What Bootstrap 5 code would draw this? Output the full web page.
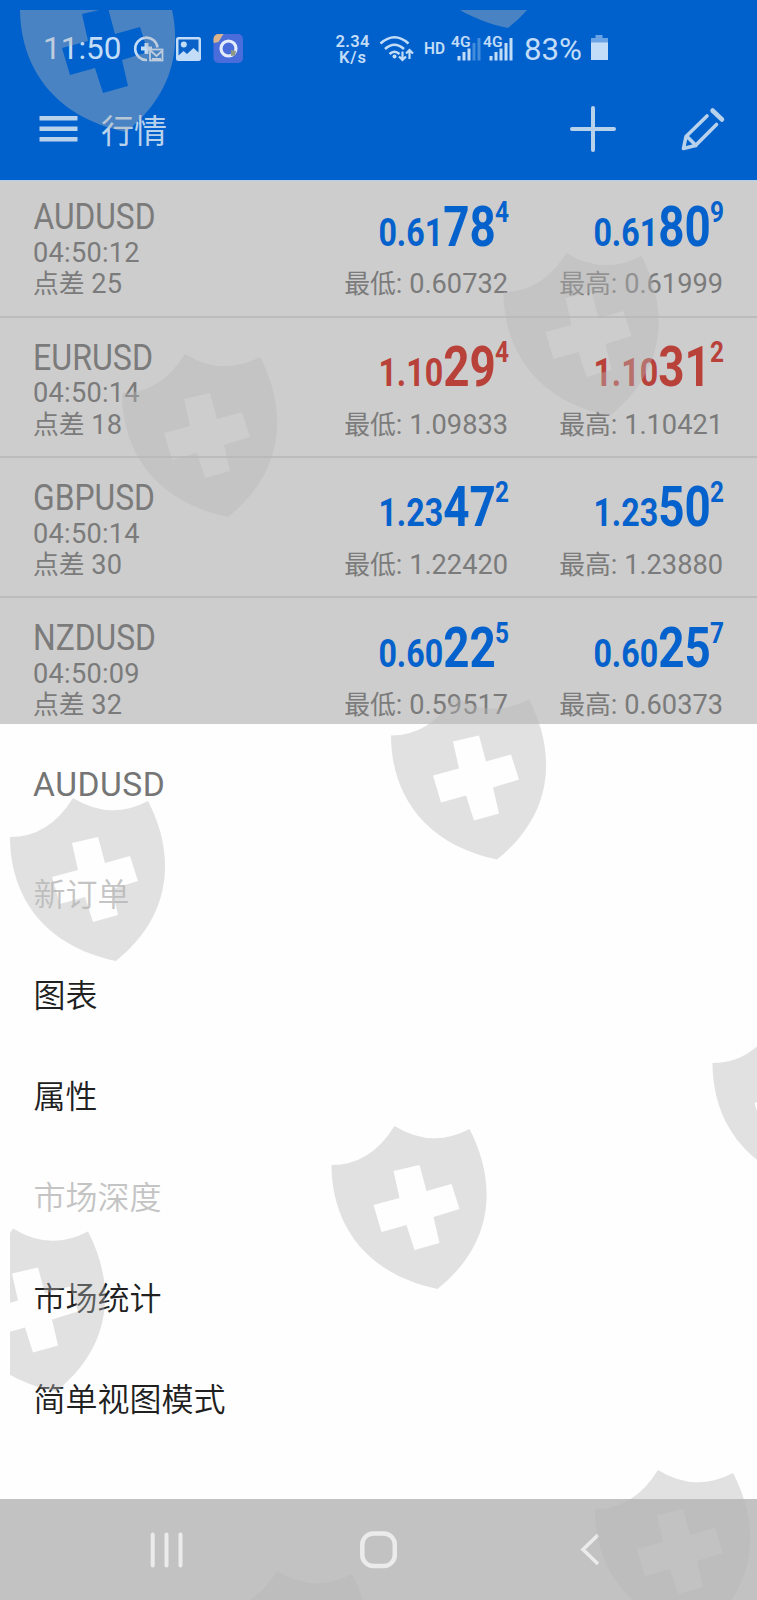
<!DOCTYPE html>
<html lang="zh-CN">
<head>
    <meta charset="utf-8">
    <meta name="viewport" content="width=device-width, initial-scale=1">
    <title>行情</title>
    <link href="https://cdn.jsdelivr.net/npm/bootstrap@5.3.0/dist/css/bootstrap.min.css" rel="stylesheet">
    <style>
        body { font-family: Roboto, "Noto Sans CJK SC", sans-serif; background: #fefefe; }
        svg { display: block; flex: none; overflow: visible; }
        svg text { font-family: Roboto, "Noto Sans CJK SC", sans-serif; }
        .screen { width: 757px; height: 1600px; }

        /* header */
        .top-area { height: 180px; background: #0061cc; color: #c3ddf8; }
        .status-line { height: 58px; margin-top: 20px; }
        .clock { box-sizing: content-box; width: 91px; padding-left: 43px; font-size: 31.5px; line-height: 60px; }
        .tool-line { height: 102px; color: #b9d2ec; }
        .page-name { font-size: 33px; line-height: 50px; padding-top: 5px; margin-left: 23px; width: 468px; }

        /* quotes */
        .quotes { height: 544px; background: #cdcdcd; border-top: 1px solid #b4cfe8; color: #7b7b7b; overflow: hidden; }
        .quote { height: 140.4px; flex: none; padding: 0 34px 15.3px 33px; border-bottom: 2px solid #bcbcbc; }
        .quote:first-child { height: 136.7px; }
        .quote-text { font-size: 27.2px; line-height: 31.2px; white-space: nowrap; }
        .quote-text svg { margin-bottom: 1.7px; }
        .quote-text .cn { font-size: 25.8px; }
        .quote-time { letter-spacing: .25px; }
        .side-col { width: 215px; }
        .up { fill: #0561cb; }
        .down { fill: #b8413a; }
        .price { font-weight: 700; }

        /* bottom sheet */
        .sheet { height: 775px; color: #202020; font-size: 32px; }
        .sheet-title { height: 119px; line-height: 121px; padding-left: 33px; font-size: 33.6px; letter-spacing: .5px; color: #757575; }
        .sheet-item { height: 101.1px; line-height: 104px; padding-left: 33.5px; font-weight: 350; }
        .sheet-item.off { color: #c4c4c4; }

        .nav-keys { height: 101px; background: #c2c2c2; }
        .shields { left: 10px; top: 10px; pointer-events: none; overflow: hidden; }
    </style>
</head>
<body>
<div class="screen position-relative overflow-hidden">

    <div class="top-area overflow-hidden">
        <div class="status-line d-flex align-items-center">
            <div class="clock">11:50</div>
            <svg width="31" height="30" viewBox="0 0 31 30" fill="none" stroke="currentColor">
                <path d="M13 26A11.2 11.2 0 1 1 23.500 13.500" stroke-width="2.6"/>
                <path d="M12.500 9v11M7 14.500h11" stroke-width="4"/>
                <rect x="16" y="15.500" width="12.500" height="11" stroke-width="1.8"/>
                <path d="M17 17l5.500 5 5.500-5M18 25h9" stroke-width="1.800"/>
            </svg>
            <svg class="ms-2" width="30" height="26" viewBox="0 0 30 26">
                <rect x="3" y="1" width="25" height="24" rx="2.500" fill="currentColor"/>
                <path d="M5.500 3.500h20v13l-5-4.500-6.500 6-3.500-3-5 4.500z" fill="#0a62c8"/>
                <circle cx="10.800" cy="8.500" r="3" fill="currentColor"/>
            </svg>
            <svg width="42" height="30" viewBox="0 0 42 30">
                <rect x="10.500" y="0" width="29.500" height="29" rx="5" fill="#4a6ddb"/>
                <path d="M10.500 9V5a5 5 0 0 1 5-5h5l-5 8z" fill="#d9b38c"/>
                <circle cx="25.500" cy="14.500" r="7.500" fill="none" stroke="#e4ecfb" stroke-width="3.200"/>
                <path d="M28 16l5 1-1 4.500-4 .5z" fill="#8d9a86"/>
            </svg>
            <svg width="130" height="34" viewBox="0 0 130 34" fill="currentColor">
                <g font-size="16.500" font-weight="600">
                    <text x="90.500" y="15" textLength="34">2.34</text>
                    <text x="94" y="30.500" textLength="27">K/s</text>
                </g>
            </svg>
            <svg width="42" height="28" viewBox="0 0 42 28" fill="none" stroke="currentColor" stroke-width="2.600">
                <path d="M5.500 8.500q14-12.500 28 0M10 14q9.500-8.500 19 0M14.500 19q5-4.500 10 0"/>
                <circle cx="19.500" cy="21.500" r="2" fill="currentColor" stroke="none"/>
                <path d="M27.500 16.500v8M24 21.500l3.500 3.500 3.500-3.500M34.500 24v-8M31 18.500l3.500-3.500 3.500 3.500" stroke-width="2.200"/>
            </svg>
            <svg width="34" height="24" viewBox="0 0 34 24" fill="currentColor">
                <text x="7" y="16.500" font-size="16" font-weight="600" textLength="21" lengthAdjust="spacingAndGlyphs">HD</text>
            </svg>
            <svg width="32" height="28" viewBox="0 0 32 28" fill="currentColor">
                <text x="0" y="11.500" font-size="14.500" font-weight="600" textLength="19.500" lengthAdjust="spacingAndGlyphs">4G</text>
                <path d="M6.500 21h3v4.500h-3zM11.500 17h3v8.500h-3zM16.500 13.500h3v12h-3z"/>
                <path d="M21.500 8h3v17.500h-3zM26.500 3h3v22.500h-3z" opacity=".35"/>
            </svg>
            <svg width="32" height="28" viewBox="0 0 32 28" fill="currentColor">
                <text x="0" y="11.500" font-size="14.500" font-weight="600" textLength="19.500" lengthAdjust="spacingAndGlyphs">4G</text>
                <path d="M6.500 21h3v4.500h-3zM11.500 17h3v8.500h-3zM16.500 13.500h3v12h-3zM21.500 8h3v17.500h-3zM26.500 3h3v22.500h-3z"/>
            </svg>
            <svg width="96" height="40" viewBox="0 0 96 40" fill="currentColor">
                <text x="9" y="30.500" font-size="32" textLength="58" lengthAdjust="spacingAndGlyphs">83%</text>
                <path d="M80.500 6h7v3h-7zM76 9h17v5H76z" opacity=".55"/>
                <path d="M76 13.500h17V31H76z"/>
            </svg>
        </div>
        <div class="tool-line d-flex align-items-center">
            <svg width="78" height="40" viewBox="0 0 78 40" fill="currentColor">
                <path d="M39.500 7h38v4.500h-38zM39.500 17.500h38v4.500h-38zM39.500 28h38v4.500h-38z"/>
            </svg>
            <div class="page-name">行情</div>
            <svg width="188" height="50" viewBox="0 0 188 50" fill="none" stroke="currentColor" stroke-width="4" stroke-linecap="round">
                <path d="M3 25h42M24 4v42"/>
                <path d="M138 12L117 32.500 114.500 44.500 126.500 41.500 147.500 20.500M118 32.500L127 41.500" stroke-width="3.600" stroke-linejoin="round"/>
                <path d="M143.500 6.500L153 15.500" stroke-width="4.500"/>
            </svg>
        </div>
    </div>

    <div class="quotes d-flex flex-column">
        <div class="quote d-flex align-items-end">
            <div class="quote-text flex-grow-1">
                <svg width="150" height="40"><text x="0.500" y="33.200" font-size="37" fill="#7b7b7b" textLength="122" lengthAdjust="spacingAndGlyphs">AUDUSD</text></svg>
                <div class="quote-time">04:50:12</div>
                <div><span class="cn">点差</span> 25</div>
            </div>
            <div class="quote-text side-col text-end">
                <svg class="price up ms-auto" width="132" height="70">
                    <text x="2.400" y="47.600" font-size="39" textLength="64.800" lengthAdjust="spacingAndGlyphs">0.61</text>
                    <text x="67.300" y="47.600" font-size="55" textLength="52.600" lengthAdjust="spacingAndGlyphs">78</text>
                    <text x="119" y="23.600" font-size="29.500" textLength="14" lengthAdjust="spacingAndGlyphs">4</text>
                </svg>
                <div><span class="cn">最低</span>: 0.60732</div>
            </div>
            <div class="quote-text side-col text-end">
                <svg class="price up ms-auto" width="132" height="70">
                    <text x="2.400" y="47.600" font-size="39" textLength="64.800" lengthAdjust="spacingAndGlyphs">0.61</text>
                    <text x="67.300" y="47.600" font-size="55" textLength="52.600" lengthAdjust="spacingAndGlyphs">80</text>
                    <text x="119" y="23.600" font-size="29.500" textLength="14" lengthAdjust="spacingAndGlyphs">9</text>
                </svg>
                <div><span class="cn">最高</span>: 0.61999</div>
            </div>
        </div>
        <div class="quote d-flex align-items-end">
            <div class="quote-text flex-grow-1">
                <svg width="150" height="40"><text x="0" y="33.200" font-size="37" fill="#7b7b7b" textLength="120" lengthAdjust="spacingAndGlyphs">EURUSD</text></svg>
                <div class="quote-time">04:50:14</div>
                <div><span class="cn">点差</span> 18</div>
            </div>
            <div class="quote-text side-col text-end">
                <svg class="price down ms-auto" width="132" height="70">
                    <text x="2.400" y="47.600" font-size="39" textLength="64.800" lengthAdjust="spacingAndGlyphs">1.10</text>
                    <text x="67.300" y="47.600" font-size="55" textLength="52.600" lengthAdjust="spacingAndGlyphs">29</text>
                    <text x="119" y="23.600" font-size="29.500" textLength="14" lengthAdjust="spacingAndGlyphs">4</text>
                </svg>
                <div><span class="cn">最低</span>: 1.09833</div>
            </div>
            <div class="quote-text side-col text-end">
                <svg class="price down ms-auto" width="132" height="70">
                    <text x="2.400" y="47.600" font-size="39" textLength="64.800" lengthAdjust="spacingAndGlyphs">1.10</text>
                    <text x="67.300" y="47.600" font-size="55" textLength="52.600" lengthAdjust="spacingAndGlyphs">31</text>
                    <text x="119" y="23.600" font-size="29.500" textLength="14" lengthAdjust="spacingAndGlyphs">2</text>
                </svg>
                <div><span class="cn">最高</span>: 1.10421</div>
            </div>
        </div>
        <div class="quote d-flex align-items-end">
            <div class="quote-text flex-grow-1">
                <svg width="150" height="40"><text x="0" y="33.200" font-size="37" fill="#7b7b7b" textLength="122" lengthAdjust="spacingAndGlyphs">GBPUSD</text></svg>
                <div class="quote-time">04:50:14</div>
                <div><span class="cn">点差</span> 30</div>
            </div>
            <div class="quote-text side-col text-end">
                <svg class="price up ms-auto" width="132" height="70">
                    <text x="2.400" y="47.600" font-size="39" textLength="64.800" lengthAdjust="spacingAndGlyphs">1.23</text>
                    <text x="67.300" y="47.600" font-size="55" textLength="52.600" lengthAdjust="spacingAndGlyphs">47</text>
                    <text x="119" y="23.600" font-size="29.500" textLength="14" lengthAdjust="spacingAndGlyphs">2</text>
                </svg>
                <div><span class="cn">最低</span>: 1.22420</div>
            </div>
            <div class="quote-text side-col text-end">
                <svg class="price up ms-auto" width="132" height="70">
                    <text x="2.400" y="47.600" font-size="39" textLength="64.800" lengthAdjust="spacingAndGlyphs">1.23</text>
                    <text x="67.300" y="47.600" font-size="55" textLength="52.600" lengthAdjust="spacingAndGlyphs">50</text>
                    <text x="119" y="23.600" font-size="29.500" textLength="14" lengthAdjust="spacingAndGlyphs">2</text>
                </svg>
                <div><span class="cn">最高</span>: 1.23880</div>
            </div>
        </div>
        <div class="quote d-flex align-items-end">
            <div class="quote-text flex-grow-1">
                <svg width="150" height="40"><text x="0" y="33.200" font-size="37" fill="#7b7b7b" textLength="123" lengthAdjust="spacingAndGlyphs">NZDUSD</text></svg>
                <div class="quote-time">04:50:09</div>
                <div><span class="cn">点差</span> 32</div>
            </div>
            <div class="quote-text side-col text-end">
                <svg class="price up ms-auto" width="132" height="70">
                    <text x="2.400" y="47.600" font-size="39" textLength="64.800" lengthAdjust="spacingAndGlyphs">0.60</text>
                    <text x="67.300" y="47.600" font-size="55" textLength="52.600" lengthAdjust="spacingAndGlyphs">22</text>
                    <text x="119" y="23.600" font-size="29.500" textLength="14" lengthAdjust="spacingAndGlyphs">5</text>
                </svg>
                <div><span class="cn">最低</span>: 0.59517</div>
            </div>
            <div class="quote-text side-col text-end">
                <svg class="price up ms-auto" width="132" height="70">
                    <text x="2.400" y="47.600" font-size="39" textLength="64.800" lengthAdjust="spacingAndGlyphs">0.60</text>
                    <text x="67.300" y="47.600" font-size="55" textLength="52.600" lengthAdjust="spacingAndGlyphs">25</text>
                    <text x="119" y="23.600" font-size="29.500" textLength="14" lengthAdjust="spacingAndGlyphs">7</text>
                </svg>
                <div><span class="cn">最高</span>: 0.60373</div>
            </div>
        </div>
    </div>

    <div class="sheet">
        <div class="sheet-title">AUDUSD</div>
        <div class="sheet-item off">新订单</div>
        <div class="sheet-item">图表</div>
        <div class="sheet-item">属性</div>
        <div class="sheet-item off">市场深度</div>
        <div class="sheet-item">市场统计</div>
        <div class="sheet-item">简单视图模式</div>
    </div>

    <div class="nav-keys">
        <svg width="757" height="101" viewBox="0 0 757 101" fill="none" stroke="#ebebeb" stroke-width="4" stroke-linecap="round">
            <path d="M152.700 35.500v31M166.500 35.500v31M180.500 35.500v31"/>
            <rect x="362.300" y="34.500" width="32.500" height="32.500" rx="11" stroke-width="4.500"/>
            <path d="M598 36L583 50.500 598 65" stroke-width="3.600" stroke-linecap="butt"/>
        </svg>
    </div>

    <!-- shield watermark over the whole screen -->
    <svg class="shields position-absolute" width="747" height="1590" viewBox="10 10 747 1590" fill="#b6b6b6" fill-opacity=".4">
        <defs>
            <path id="shield" fill-rule="evenodd" d="M0 0Q39 0 63-39Q100-16 138-36C163 12 167 75 106 124C30 108 0 55 0 0zM62 6L68 33 42 40 50 67 75 60 83 85 108 78 102 52 128 44 120 19 95 26 88 0z"/>
        </defs>
        <use href="#shield" x="20" y="8"/>
        <use href="#shield" x="402" y="-96"/>
        <use href="#shield" x="503.500" y="292"/>
        <use href="#shield" x="122" y="393"/>
        <use href="#shield" x="391" y="735.500"/>
        <use href="#shield" x="10" y="837"/>
        <use href="#shield" x="712.500" y="1063"/>
        <use href="#shield" x="331.500" y="1165"/>
        <use href="#shield" x="-50" y="1267.500"/>
        <use href="#shield" x="595" y="1509"/>
        <use href="#shield" x="214" y="1610"/>
    </svg>
</div>
<script src="https://cdn.jsdelivr.net/npm/bootstrap@5.3.0/dist/js/bootstrap.bundle.min.js"></script>
</body>
</html>
